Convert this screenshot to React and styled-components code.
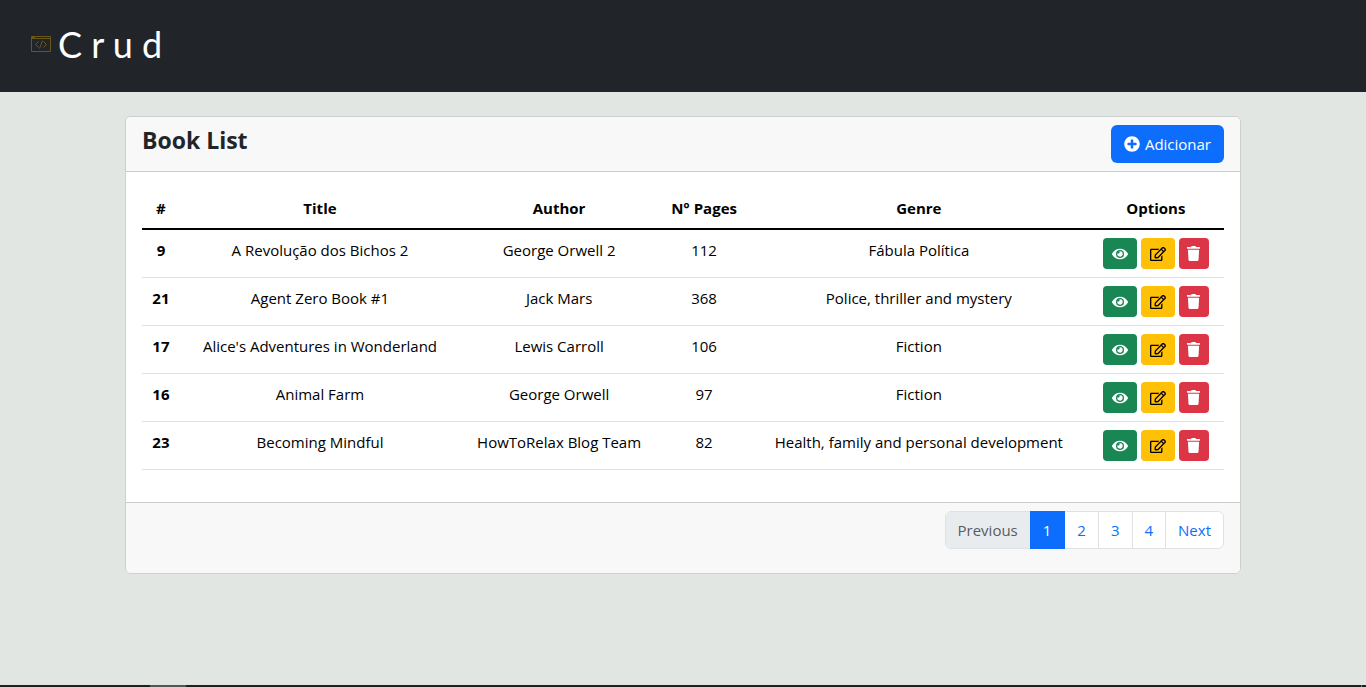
import React from "react";
import styled, { createGlobalStyle, css } from "styled-components";
import { FaEye, FaPlusCircle, FaRegEdit, FaTrash } from "react-icons/fa";

const GlobalStyle = createGlobalStyle`
  *, *::before, *::after { box-sizing: border-box; }
  body {
    margin: 0;
    background: #e1e6e2;
    color: #212529;
    font-family: "Segoe UI", "Open Sans", "Noto Sans", sans-serif;
    font-size: 15px;
    line-height: 24px;
  }
`;

const Page = styled.div`
  display: flex;
  flex-direction: column;
  min-height: 100vh;
`;

const Navbar = styled.header`
  display: flex;
  align-items: center;
  height: 92px;
  padding: 0 30px 4px;
  background: #212529;
`;

const Brand = styled.a`
  display: flex;
  align-items: center;
  gap: 6px;
  color: #fff;
  font-family: Lato, sans-serif;
  font-size: 36px;
  line-height: 40px;
  text-decoration: none;
`;

const Container = styled.main`
  flex: 1;
  width: 100%;
  max-width: 1140px;
  margin: 0 auto;
  padding: 24px 12px;
`;

const Card = styled.section`
  border: 1px solid #cdd0cd;
  border-radius: 6px;
  background: #fff;
  overflow: hidden;
`;

const CardHeader = styled.div`
  display: flex;
  justify-content: space-between;
  align-items: flex-start;
  padding: 8px 16px;
  background: #f8f8f8;
  border-bottom: 1px solid #cbcbcb;
`;

const Title = styled.h1`
  margin: 0;
  font-size: 23px;
  line-height: 30px;
  font-weight: 700;
`;

const AddButton = styled.button`
  display: flex;
  align-items: center;
  gap: 5px;
  height: 38px;
  padding: 0 13px;
  border: 0;
  border-radius: 6px;
  background: #0d6efd;
  color: #fff;
  font: inherit;
  cursor: pointer;
`;

const CardBody = styled.div`
  padding: 16px 16px 32px;
`;

const Table = styled.table`
  width: 100%;
  border-collapse: collapse;
  table-layout: fixed;
  color: #000;
  text-align: center;

  th, td {
    padding: 8px 0;
    vertical-align: top;
  }
  thead th {
    border-bottom: 2px solid #000;
  }
  tbody tr {
    height: 48px;
    border-bottom: 1px solid #dee2e6;
  }
`;

const Column = styled.col`
  width: ${(p) => p.$share}%;
`;

const Actions = styled.div`
  display: flex;
  justify-content: center;
  gap: 4px;
`;

const tones = {
  view: css`background: #198754; color: #fff;`,
  edit: css`background: #ffc107; color: #000;`,
  remove: css`background: #dc3545; color: #fff;`,
};

const ActionButton = styled.button`
  display: flex;
  align-items: center;
  justify-content: center;
  width: ${(p) => (p.$tone === "remove" ? 30 : 34)}px;
  height: 31px;
  padding: 0;
  border: 0;
  border-radius: 4px;
  cursor: pointer;
  ${(p) => tones[p.$tone]}
`;

const CardFooter = styled.div`
  display: flex;
  justify-content: flex-end;
  padding: 8px 16px 24px;
  background: #f8f8f8;
  border-top: 1px solid #cbcbcb;
`;

const Pagination = styled.nav`
  display: flex;
  border: 1px solid #dee2e6;
  border-radius: 6px;
  background: #fff;
`;

const PageLink = styled.a`
  padding: 6px 12px;
  color: #0d6efd;
  text-decoration: none;

  &:not(:last-child) {
    border-right: 1px solid #dee2e6;
  }
  ${(p) => p.$disabled && css`
    border-radius: 5px 0 0 5px;
    background: #e9ecef;
    color: #595c5f;
  `}
  ${(p) => p.$active && css`
    margin: -1px 0 -1px -1px;
    padding: 7px 13px;
    background: #0d6efd;
    color: #fff;
    &:not(:last-child) {
      border-right-color: #0d6efd;
    }
  `}
`;

const BottomBar = styled.footer`
  display: flex;
  justify-content: space-between;
  height: 2px;
  padding: 0 4px 0 150px;
  background: #221e20;
`;

const BarMark = styled.span`
  width: ${(p) => p.$width}px;
  background: ${(p) => p.$color};
`;

const books = [
  [9, "A Revolução dos Bichos 2", "George Orwell 2", 112, "Fábula Política"],
  [21, "Agent Zero Book #1", "Jack Mars", 368, "Police, thriller and mystery"],
  [17, "Alice's Adventures in Wonderland", "Lewis Carroll", 106, "Fiction"],
  [16, "Animal Farm", "George Orwell", 97, "Fiction"],
  [23, "Becoming Mindful", "HowToRelax Blog Team", 82, "Health, family and personal development"],
];

const columns = [
  ["#", 3.5],
  ["Title", 25.9],
  ["Author", 18.3],
  ["N\u00b0 Pages", 8.5],
  ["Genre", 31.2],
  ["Options", 12.6],
];

function CodeWindowIcon() {
  return (
    <svg width="22" height="18" viewBox="0 0 22 18" fill="none" stroke="#69571a" aria-hidden="true">
      <path d="M1.5 1.5h19v15h-19zM1.500 3.5h19M2 2.500h3" />
      <path d="M8.500 6.500 5.500 9.500l3 3M13.500 6.500l3 3-3 3M12.500 5.500l-3 8" />
    </svg>
  );
}

export default function App() {
  return (
    <Page>
      <GlobalStyle />
      <Navbar>
        <Brand href="#">
          <CodeWindowIcon />
          <span>C r u d</span>
        </Brand>
      </Navbar>
      <Container>
        <Card>
          <CardHeader>
            <Title>Book List</Title>
            <AddButton type="button">
              <FaPlusCircle size={16} />
              Adicionar
            </AddButton>
          </CardHeader>
          <CardBody>
            <Table>
              <colgroup>
                {columns.map(([name, share]) => <Column key={name} $share={share} />)}
              </colgroup>
              <thead>
                <tr>
                  {columns.map(([name]) => <th key={name} scope="col">{name}</th>)}
                </tr>
              </thead>
              <tbody>
                {books.map(([id, title, author, pages, genre]) => (
                  <tr key={id}>
                    <th scope="row">{id}</th>
                    <td>{title}</td>
                    <td>{author}</td>
                    <td>{pages}</td>
                    <td>{genre}</td>
                    <td>
                      <Actions>
                        <ActionButton type="button" $tone="view" aria-label={`View ${title}`}>
                          <FaEye size={16} />
                        </ActionButton>
                        <ActionButton type="button" $tone="edit" aria-label={`Edit ${title}`}>
                          <FaRegEdit size={16} />
                        </ActionButton>
                        <ActionButton type="button" $tone="remove" aria-label={`Delete ${title}`}>
                          <FaTrash size={15} />
                        </ActionButton>
                      </Actions>
                    </td>
                  </tr>
                ))}
              </tbody>
            </Table>
          </CardBody>
          <CardFooter>
            <Pagination aria-label="Pages">
              <PageLink $disabled aria-disabled="true">Previous</PageLink>
              <PageLink href="#1" $active aria-current="page">1</PageLink>
              <PageLink href="#2">2</PageLink>
              <PageLink href="#3">3</PageLink>
              <PageLink href="#4">4</PageLink>
              <PageLink href="#next">Next</PageLink>
            </Pagination>
          </CardFooter>
        </Card>
      </Container>
      <BottomBar>
        <BarMark $width={36} $color="#555" />
        <BarMark $width={1} $color="#777" />
      </BottomBar>
    </Page>
  );
}
